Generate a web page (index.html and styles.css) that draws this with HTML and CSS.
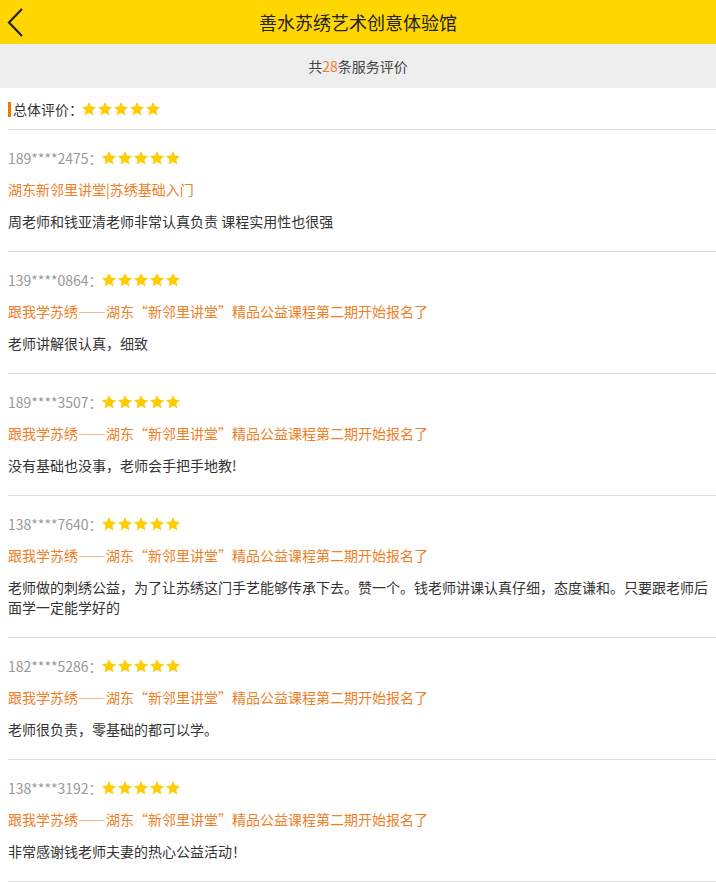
FILE: index.html
```html
<!DOCTYPE html>
<html>
<head>
	<meta charset="utf-8">
	<meta content="width=device-width, initial-scale=1.0" name="viewport">
	<title>善水苏绣艺术创意体验馆</title>
	<link rel="stylesheet" href="styles.css">
</head>
<body>
	<div class="hd">
		<a class="back" href="#">
			<svg width="20" height="30" viewBox="0 0 20 30"><path d="M15 1 L2 14.5 L15 28" fill="none" stroke="#222" stroke-width="2.2"/></svg>
		</a>
		<h1>善水苏绣艺术创意体验馆</h1>
		<span></span>
	</div>
	<div class="sum">共<em>28</em>条服务评价</div>

	<div class="list">
		<div class="total">
			<span class="lbl">总体评价：</span><span class="stars" data-n="5"></span>
		</div>

		<div class="item">
			<p class="user">189****2475：<span class="stars" data-n="5"></span></p>
			<p class="course">湖东新邻里讲堂|苏绣基础入门</p>
			<p class="txt">周老师和钱亚清老师非常认真负责 课程实用性也很强</p>
		</div>
		<div class="item">
			<p class="user">139****0864：<span class="stars" data-n="5"></span></p>
			<p class="course fw">跟我学苏绣——湖东“新邻里讲堂”精品公益课程第二期开始报名了</p>
			<p class="txt">老师讲解很认真，细致</p>
		</div>
		<div class="item">
			<p class="user">189****3507：<span class="stars" data-n="5"></span></p>
			<p class="course fw">跟我学苏绣——湖东“新邻里讲堂”精品公益课程第二期开始报名了</p>
			<p class="txt">没有基础也没事，老师会手把手地教!</p>
		</div>
		<div class="item">
			<p class="user">138****7640：<span class="stars" data-n="5"></span></p>
			<p class="course fw">跟我学苏绣——湖东“新邻里讲堂”精品公益课程第二期开始报名了</p>
			<p class="txt">老师做的刺绣公益，为了让苏绣这门手艺能够传承下去。赞一个。钱老师讲课认真仔细，态度谦和。只要跟老师后面学一定能学好的</p>
		</div>
		<div class="item">
			<p class="user">182****5286：<span class="stars" data-n="5"></span></p>
			<p class="course fw">跟我学苏绣——湖东“新邻里讲堂”精品公益课程第二期开始报名了</p>
			<p class="txt">老师很负责，零基础的都可以学。</p>
		</div>
		<div class="item">
			<p class="user">138****3192：<span class="stars" data-n="5"></span></p>
			<p class="course fw">跟我学苏绣——湖东“新邻里讲堂”精品公益课程第二期开始报名了</p>
			<p class="txt">非常感谢钱老师夫妻的热心公益活动！</p>
		</div>
	</div>

	<script>
	// fill star rows
	var star = '<svg width="16" height="16" viewBox="0 0 24 24"><path d="M12 1.5 L15.1 8.4 L22.6 9.2 L17 14.2 L18.6 21.6 L12 17.8 L5.4 21.6 L7 14.2 L1.4 9.2 L8.9 8.4 Z" fill="#ffcc00"/></svg>';
	[].forEach.call(document.querySelectorAll('.stars'), function (el) {
		var n = parseInt(el.getAttribute('data-n'), 10);
		var html = '';
		for (var i = 0; i < n; i++) html += star;
		el.innerHTML = html;
	});
	</script>
</body>
</html>
```

FILE: styles.css
```css
	* {
		box-sizing: border-box;
	}
	body {
		margin: 0;
		font-family: "Noto Sans CJK SC", "Noto Sans", sans-serif;
		font-size: 14px;
		color: #333;
		background-color: #fff;
	}
	p {
		margin: 0;
	}
	.hd {
		height: 44px;
		background-color: #ffd600;
		display: grid;
		grid-template-columns: 44px 1fr 44px;
		align-items: center;
	}
	.hd h1 {
		margin: 0;
		font-size: 18px;
		font-weight: normal;
		color: #222;
		text-align: center;
	}
	.back {
		display: flex;
		padding-left: 7px;
		padding-top: 1px;
	}
	.sum {
		height: 44px;
		line-height: 44px;
		background-color: #eee;
		text-align: center;
		color: #444;
	}
	.sum em {
		font-style: normal;
		color: #ee7d28;
	}
	.list {
		margin-left: 8px;
	}
	.total {
		height: 42px;
		display: flex;
		align-items: center;
		border-bottom: 1px solid #ddd;
		padding-top: 1px;
	}
	.lbl {
		border-left: 3px solid #ee7700;
		padding-left: 2px;
		line-height: 15px;
	}
	.stars {
		display: inline-flex;
		vertical-align: -2px;
		margin-left: -2px;
	}
	.stars svg {
		display: block;
	}
	.item {
		border-bottom: 1px solid #ddd;
		padding: 18px 0 20px;
		line-height: 20px;
	}
	.user {
		color: #999;
	}
	.course {
		color: #ee8027;
		margin-top: 11px;
	}
	.course.fw {
		font-feature-settings: "fwid";
	}
	.txt {
		margin-top: 12px;
		color: #333;
	}
```
